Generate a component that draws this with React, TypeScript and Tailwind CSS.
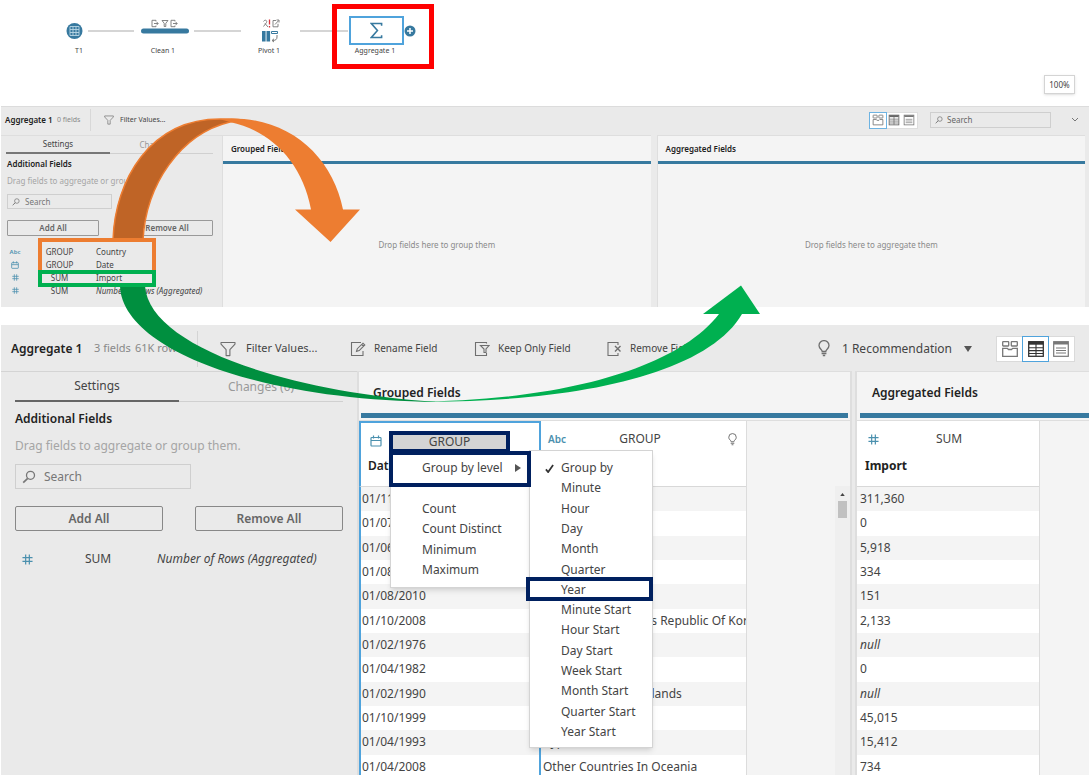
import React from "react";

type IconProps = { className?: string };

const Funnel = ({ className = "" }: IconProps) => (
  <svg viewBox="0 0 16 16" className={className} fill="none" stroke="#6f6f6f" strokeWidth="1.1" strokeLinejoin="round">
    <path d="M1 1.5h14v1.6L9.9 8.6v6H6.1v-6L1 3.100z" />
  </svg>
);

const Magnifier = ({ className = "" }: IconProps) => (
  <svg viewBox="0 0 14 14" className={className} fill="none" stroke="#777" strokeWidth="1.3">
    <circle cx="8.500" cy="5.300" r="4" />
    <path d="M5.700 8.300 1.200 12.600" strokeWidth="1.700" />
  </svg>
);

const Hash = ({ className = "" }: IconProps) => (
  <svg viewBox="0 0 12 12" className={className} fill="none" stroke="#4b90ae" strokeWidth="1.300">
    <path d="M4 0.500v11M8 0.500v11M0.500 4h11M0.500 8h11" />
  </svg>
);

const Calendar = ({ className = "" }: IconProps) => (
  <svg viewBox="0 0 12 12" className={className} fill="none" stroke="#4b90ae" strokeWidth="1.200">
    <rect x="1" y="2.500" width="10" height="8.500" rx="0.800" />
    <path d="M1 5.500h10M3.500 0.500v3M8.500 0.500v3" />
  </svg>
);

const Bulb = ({ className = "" }: IconProps) => (
  <svg viewBox="0 0 12 17" className={className} fill="none" stroke="#6f6f6f" strokeWidth="1.300">
    <path d="M4.200 11.500C4.200 9.500 1 8.800 1 5.600a5 5 0 0 1 10 0c0 3.200-3.200 3.900-3.200 5.900zM3.600 13.500h4.800M4.800 15.500h2.400" />
  </svg>
);

const RenameIcon = ({ className = "" }: IconProps) => (
  <svg viewBox="0 0 16 16" className={className} fill="none" stroke="#6f6f6f" strokeWidth="1.100">
    <path d="M11 1.500H1.500v13H13V10M6.500 10.500l.8-2.800 5.700-5.500 1.800 1.800-5.600 5.600zM11.700 3.500l1.800 1.800" />
  </svg>
);

const KeepIcon = ({ className = "" }: IconProps) => (
  <svg viewBox="0 0 16 16" className={className} fill="none" stroke="#6f6f6f" strokeWidth="1.100">
    <path d="M12.500 2.500v-1h-11v13h11V12" />
    <path d="M6.500 4.500h8.500l-3 3.500v3.500h-2V8z" />
  </svg>
);

const RemoveIcon = ({ className = "" }: IconProps) => (
  <svg viewBox="0 0 16 16" className={className} fill="none" stroke="#6f6f6f" strokeWidth="1.100">
    <path d="M12 4V1.500H2v13h10V12" />
    <path d="M9 5l5.500 5.500M14.500 5 9 10.500" strokeWidth="1.400" />
  </svg>
);

const ViewCards = ({ className = "" }: IconProps) => (
  <svg viewBox="0 0 18 18" className={className} fill="none" stroke="#777" strokeWidth="1.300">
    <rect x="1.700" y="1.700" width="6" height="4.300" rx="0.500" />
    <rect x="10.300" y="1.700" width="6" height="4.300" rx="0.500" />
    <path d="M1.700 8.300h4.600l1.200 1.200h3l1.200-1.200h4.600v8H1.700z" />
  </svg>
);

const ViewGrid = ({ className = "" }: IconProps) => (
  <svg viewBox="0 0 18 18" className={className} fill="none" stroke="currentColor" strokeWidth="1.300">
    <rect x="1.700" y="1.700" width="14.600" height="14.600" />
    <path d="M2 3.200h14" strokeWidth="3" />
    <path d="M9 4v12M2 7.700h14M2 10.600h14M2 13.500h14" strokeWidth="1.100" />
  </svg>
);

const ViewList = ({ className = "" }: IconProps) => (
  <svg viewBox="0 0 18 18" className={className} fill="none" stroke="#777" strokeWidth="1.200">
    <rect x="1.700" y="1.700" width="14.600" height="14.600" />
    <path d="M2 3.200h14" strokeWidth="2.600" />
    <path d="M4 8h10M4 10.500h10M4 13h10" strokeWidth="1" />
  </svg>
);

function FlowPane() {
  return (
    <section className="relative h-[106px] shrink-0 text-[7px] leading-[10px] text-[#444]">
      <svg className="absolute left-0 top-0 h-[60px] w-[440px]" viewBox="0 0 440 60" fill="none">
        <path d="M88 31h46M194 31h47M300 31h48" stroke="#c8c8c8" strokeWidth="1.500" />
        <circle cx="74.500" cy="31" r="8" fill="#37799f" />
        <path d="M70 26.500h9v9h-9zM73 26.500v9M76 26.500v9M70 29.500h9M70 32.500h9" stroke="#b9d6e4" strokeWidth="0.900" />
        <path d="M143.500 31h43" stroke="#37799f" strokeWidth="5" strokeLinecap="round" />
        <g stroke="#777" strokeWidth="0.900">
          <path d="M156 21.500v-1.200h-4v6.400h4v-1.200M154 23.500h4M156.700 22l1.500 1.500-1.500 1.500" />
          <path d="M162 20.500h6l-2.200 2.800v3.200h-1.600v-3.200z" />
          <path d="M175 21.500v-1.200h-4v6.400h4v-1.200M173 23.500h4M175.700 22l1.500 1.500-1.500 1.500" />
          <path d="M263.500 21.500c1.500-2.500 4-1 3 1l-3 4M265 23.500l3 3.500" />
          <path d="M276 20.500h-3v6.300h5v-3M275 24.500l3.500-3.800M276.500 20h2.500v2.500" />
        </g>
        <path d="M269.500 19.500v5M269.500 26v1.500" stroke="#d9343c" strokeWidth="1.300" />
        <path d="M262 31h3.600v10.500H262zM266.500 31h3.600v10.500h-3.600z" fill="#37799f" />
        <path d="M271.500 31.500h6v2h-6z" stroke="#37799f" />
        <path d="M277 35v2c0 2.500-1.500 3.500-4.500 3.500m1.500-1.700L272 40.500l2 1.500" stroke="#777" />
      </svg>
      <button aria-label="Aggregate step" className="absolute left-[349px] top-[16px] flex h-[29px] w-[55px] items-center justify-center border-2 border-[#4fa3dc] bg-white">
        <svg viewBox="0 0 14 18" className="h-[17px] w-[13px]" fill="none" stroke="#37799f" strokeWidth="1.700">
          <path d="M12.500 4V1.500h-11L8 9l-6.500 7.500h11V14" />
        </svg>
      </button>
      <svg className="absolute left-[404px] top-[25px] h-[12px] w-[12px]" viewBox="0 0 12 12">
        <circle cx="6" cy="6" r="5.500" fill="#37799f" />
        <path d="M6 3v6M3 6h6" stroke="#fff" strokeWidth="1.500" />
      </svg>
      <span className="absolute left-[79px] top-[46px] -translate-x-1/2">T1</span>
      <span className="absolute left-[163px] top-[46px] -translate-x-1/2 whitespace-nowrap">Clean 1</span>
      <span className="absolute left-[269px] top-[46px] -translate-x-1/2 whitespace-nowrap">Pivot 1</span>
      <span className="absolute left-[375px] top-[46px] -translate-x-1/2 whitespace-nowrap">Aggregate 1</span>
      <div className="absolute left-[332px] top-[4px] h-[65px] w-[102px] border-5 border-[#ff0000]" />
      <span className="absolute right-[15px] top-[75px] flex h-[19px] w-[31px] items-center justify-center border border-[#d4d4d4] bg-white text-[8px] shadow-sm">
        100%
      </span>
    </section>
  );
}

const smallFields = [
  { icon: "abc", agg: "GROUP", name: "Country" },
  { icon: "cal", agg: "GROUP", name: "Date" },
  { icon: "num", agg: "SUM", name: "Import" },
  { icon: "num", agg: "SUM", name: "Number of Rows (Aggregated)", italic: true },
];

function DropPane({ title, hint }: { title: string; hint: string }) {
  return (
    <div className="flex min-w-0 flex-1 flex-col border-l border-t border-[#dedede] bg-[#f4f4f4]">
      <h3 className="h-[25px] pl-2 text-[8px] font-semibold leading-[25px] text-[#222]">{title}</h3>
      <div className="h-[3px] bg-[#37799f]" />
      <p className="flex flex-1 items-center justify-center pt-[18px] text-[8px] text-[#8a8a8a]">{hint}</p>
    </div>
  );
}

function EmptyStep() {
  return (
    <section className="mx-px flex h-[201px] shrink-0 flex-col border-t border-[#dcdcdc] bg-[#eaeaea] text-[8px] text-[#444]">
      <header className="flex h-[28px] shrink-0 items-center pb-[2px]">
        <h2 className="w-[52px] whitespace-nowrap pl-1 font-semibold text-[#222]">Aggregate 1</h2>
        <span className="w-[37px] whitespace-nowrap pl-1 text-[7px] text-[#888]">0 fields</span>
        <span className="h-[22px] w-px bg-[#d8d8d8]" />
        <button className="ml-[13px] flex items-center gap-[6px] text-[7px]">
          <Funnel className="h-[10px] w-[10px]" />
          Filter Values...
        </button>
        <div className="ml-auto flex h-[17px] w-[49px] border border-[#dedede] bg-white">
          <button aria-label="Profile view" className="flex flex-1 items-center justify-center outline outline-[#6db3e2]"><ViewCards className="h-[12px] w-[12px]" /></button>
          <button aria-label="Grid view" className="flex flex-1 items-center justify-center text-[#666]"><ViewGrid className="h-[12px] w-[12px]" /></button>
          <button aria-label="List view" className="flex flex-1 items-center justify-center"><ViewList className="h-[12px] w-[12px]" /></button>
        </div>
        <label className="ml-3 flex h-[16px] w-[121px] items-center border border-[#cfcfcf] pl-1">
          <Magnifier className="h-[8px] w-[8px]" />
          <input aria-label="Search fields" placeholder="Search" className="ml-1 w-[90px] bg-transparent placeholder:text-[#666]" />
        </label>
        <button aria-label="Collapse" className="ml-5 mr-[10px]">
          <svg viewBox="0 0 8 6" className="h-[6px] w-[8px]" fill="none" stroke="#777"><path d="M1 1l3 3 3-3" /></svg>
        </button>
      </header>
      <div className="flex flex-1">
        <aside className="w-[221px] shrink-0 border-t border-[#dedede]">
          <div className="ml-[5px] mr-[9px] flex h-[18px]">
            <button className="w-[104px] border-b-2 border-[#777]">Settings</button>
            <button className="flex-1 border-b border-[#d0d0d0] text-[#999]">Changes (0)</button>
          </div>
          <div className="ml-[6px]">
            <h3 className="h-[20px] font-semibold leading-[20px] text-[#222]">Additional Fields</h3>
            <p className="h-[20px] leading-[14px] text-[#a5a5a5]">Drag fields to aggregate or group them.</p>
            <label className="flex h-[15px] w-[105px] items-center border border-[#cfcfcf] pl-1">
              <Magnifier className="h-[8px] w-[8px]" />
              <input aria-label="Search additional fields" placeholder="Search" className="ml-[5px] w-[80px] bg-transparent placeholder:text-[#777]" />
            </label>
            <div className="mr-[9px] mt-[11px] flex justify-between font-semibold text-[#666]">
              <button className="h-[16px] w-[92px] rounded-[1px] border border-[#999]">Add All</button>
              <button className="h-[16px] w-[92px] rounded-[1px] border border-[#999]">Remove All</button>
            </div>
            <ul className="mt-[10px] flex h-[51px] flex-col">
              {smallFields.map((f) => (
                <li key={f.name} className="flex flex-1 items-center">
                  <span className="flex w-[16px] justify-center text-[6px] font-semibold text-[#4b90ae]">
                    {f.icon === "abc" ? "Abc" : f.icon === "cal" ? <Calendar className="h-[8px] w-[8px]" /> : <Hash className="h-[7px] w-[7px]" />}
                  </span>
                  <span className="w-[73px] text-center">{f.agg}</span>
                  <span className={f.italic ? "whitespace-nowrap italic" : "whitespace-nowrap"}>{f.name}</span>
                </li>
              ))}
            </ul>
          </div>
        </aside>
        <div className="mr-[4px] flex flex-1 gap-[6px]">
          <DropPane title="Grouped Fields" hint="Drop fields here to group them" />
          <DropPane title="Aggregated Fields" hint="Drop fields here to aggregate them" />
        </div>
      </div>
    </section>
  );
}

const groupedRows = [
  ["01/11/1989", ""],
  ["01/07/2003", ""],
  ["01/06/1995", ""],
  ["01/08/1983", ""],
  ["01/08/2010", ""],
  ["01/10/2008", "Democratic People's Republic Of Korea"],
  ["01/02/1976", ""],
  ["01/04/1982", ""],
  ["01/02/1990", "Turks And Caicos Islands"],
  ["01/10/1999", ""],
  ["01/04/1993", "Cyprus"],
  ["01/04/2008", "Other Countries In Oceania"],
];

const importRows = ["311,360", "0", "5,918", "334", "151", "2,133", "null", "0", "null", "45,015", "15,412", "734"];

const levels = [
  "Group by", "Minute", "Hour", "Day", "Month", "Quarter", "Year",
  "Minute Start", "Hour Start", "Day Start", "Week Start", "Month Start", "Quarter Start", "Year Start",
];

function GroupMenus() {
  return (
    <>
      <div role="menu" className="absolute left-[31px] top-[30px] h-[137px] w-[140px] border border-[#d4d4d4] bg-white pt-[6px] shadow-md">
        <button role="menuitem" className="flex h-[20px] w-full items-center pl-[31px] text-left">
          Group by level
          <svg viewBox="0 0 6 8" className="ml-3 h-[8px] w-[6px]"><path d="M0 0l6 4-6 4z" fill="#555" /></svg>
        </button>
        <div className="mt-[21px] flex h-[81px] flex-col">
          {["Count", "Count Distinct", "Minimum", "Maximum"].map((m) => (
            <button role="menuitem" key={m} className="flex flex-1 items-center pl-[31px] text-left">{m}</button>
          ))}
        </div>
      </div>
      <div role="menu" className="absolute left-[170px] top-[29px] flex h-[298px] w-[124px] flex-col border border-[#d4d4d4] bg-white pb-[5px] pt-[7px] shadow-md">
        {levels.map((l, i) => (
          <button role="menuitem" key={l} className="flex flex-1 items-center text-left">
            <span className="flex w-[31px] justify-center">
              {i === 0 && (
                <svg viewBox="0 0 10 10" className="ml-[8px] h-[9px] w-[9px]" fill="none" stroke="#333" strokeWidth="1.900"><path d="M1 6l2.500 3L9 1" /></svg>
              )}
            </span>
            {l}
          </button>
        ))}
      </div>
      <div className="absolute left-[30px] top-[30px] h-[36px] w-[142px] border-4 border-[#00205f]" />
      <div className="absolute left-[167px] top-[156px] h-[24px] w-[127px] border-4 border-[#00205f]" />
    </>
  );
}

function GroupedTable() {
  return (
    <div className="relative w-[388px] shrink-0 border-r border-[#dcdcdc]">
      <table className="h-[358px] w-full table-fixed border-separate border-spacing-0 text-left">
        <thead>
          <tr className="h-[66px] bg-white align-top">
            <th className="w-[182px] border-x-2 border-b border-t-2 border-x-[#4fa3dc] border-b-[#d8d8d8] border-t-[#4fa3dc] p-0 font-semibold text-[#222]">
              <div className="flex items-start">
                <Calendar className="ml-[9px] mt-[12px] h-[12px] w-[12px]" />
                <button className="ml-[7px] mt-2 h-[22px] w-[121px] border-4 border-[#00205f] bg-[#d4d4d4] font-normal leading-[14px] text-[#444]">GROUP</button>
              </div>
              <div className="mt-1 pl-[7px] leading-[18px]">Date</div>
            </th>
            <th className="border-b border-[#d8d8d8] p-0 font-normal">
              <div className="flex h-[36px] items-center justify-between pl-[7px] pr-[9px]">
                <span className="text-[10px] font-semibold text-[#4b90ae]">Abc</span>
                <span className="pr-[14px]">GROUP</span>
                <Bulb className="h-[13px] w-[9px]" />
              </div>
            </th>
          </tr>
        </thead>
        <tbody>
          {groupedRows.map(([date, place]) => (
            <tr key={date} className="bg-white odd:bg-[#f4f4f4]">
              <td className="border-x-2 border-[#4fa3dc] p-0 pl-px">{date}</td>
              <td className="overflow-hidden whitespace-nowrap p-0 pl-[2px]">{place}</td>
            </tr>
          ))}
        </tbody>
      </table>
      <GroupMenus />
    </div>
  );
}

function ImportTable() {
  return (
    <table className="h-[358px] w-[183px] shrink-0 table-fixed border-separate border-spacing-0 border-r border-[#dcdcdc] text-left">
      <thead>
        <tr className="h-[66px] bg-white align-top">
          <th className="border-b border-[#d8d8d8] p-0">
            <div className="flex h-[36px] items-center pl-[11px] font-normal">
              <Hash className="h-[11px] w-[11px]" />
              <span className="w-[140px] text-center">SUM</span>
            </div>
            <div className="pl-2 leading-[18px] text-[#222]">Import</div>
          </th>
        </tr>
      </thead>
      <tbody>
        {importRows.map((v, i) => (
          <tr key={i} className="bg-white odd:bg-[#f4f4f4]">
            <td className={v === "null" ? "p-0 pl-[3px] italic" : "p-0 pl-[3px]"}>{v}</td>
          </tr>
        ))}
      </tbody>
    </table>
  );
}

function FilledStep() {
  return (
    <section className="mx-px mt-[18px] flex min-h-0 flex-1 flex-col bg-[#eaeaea] text-[12px] text-[#444]">
      <header className="flex h-[46px] shrink-0 items-center whitespace-nowrap pt-px text-[11px]">
        <h2 className="w-[93px] pl-[10px] text-[12px] font-semibold text-[#222]">Aggregate 1</h2>
        <span className="w-[41px] text-[#888]">3 fields</span>
        <span className="w-[62px] text-[#888]">61K rows</span>
        <span className="h-[36px] w-px bg-[#d4d4d4]" />
        <button className="ml-[22px] flex w-[130px] items-center gap-[10px]"><Funnel className="h-[16px] w-[16px]" />Filter Values...</button>
        <button className="flex w-[124px] items-center gap-2 text-[10px]"><RenameIcon className="h-[16px] w-[16px]" />Rename Field</button>
        <button className="flex w-[132px] items-center gap-2 text-[10px]"><KeepIcon className="h-[16px] w-[16px]" />Keep Only Field</button>
        <button className="flex items-center gap-2 text-[10px]"><RemoveIcon className="h-[16px] w-[16px]" />Remove Field</button>
        <button className="ml-auto flex items-center text-[12px]">
          <Bulb className="mr-3 h-[17px] w-[12px]" />
          1 Recommendation
          <svg viewBox="0 0 8 6" className="ml-3 h-[6px] w-[8px]"><path d="M0 0h8L4 6z" fill="#555" /></svg>
        </button>
        <div className="ml-6 mr-[14px] flex h-[26px] w-[79px] border border-[#dadada] bg-white">
          <button aria-label="Profile view" className="flex flex-1 items-center justify-center"><ViewCards className="h-[18px] w-[18px]" /></button>
          <button aria-label="Grid view" className="flex flex-1 items-center justify-center text-[#333] outline outline-[#4fa3dc]"><ViewGrid className="h-[18px] w-[18px]" /></button>
          <button aria-label="List view" className="flex flex-1 items-center justify-center"><ViewList className="h-[18px] w-[18px]" /></button>
        </div>
      </header>
      <div className="flex min-h-0 flex-1 overflow-hidden">
        <aside className="w-[356px] shrink-0 border-t border-[#d4d4d4] px-[14px]">
          <div className="flex h-[30px]">
            <button className="w-[164px] border-b-2 border-[#666]">Settings</button>
            <button className="flex-1 border-b border-[#d0d0d0] text-[#999]">Changes (0)</button>
          </div>
          <h3 className="mt-2 font-semibold leading-[18px] text-[#222]">Additional Fields</h3>
          <p className="mt-[9px] leading-[18px] text-[#a5a5a5]">Drag fields to aggregate or group them.</p>
          <label className="mt-[9px] flex h-[25px] w-[176px] items-center border border-[#cfcfcf] pl-[6px]">
            <Magnifier className="h-[14px] w-[14px]" />
            <input aria-label="Search fields to add" placeholder="Search" className="ml-2 w-[130px] bg-transparent placeholder:text-[#777]" />
          </label>
          <div className="mt-[17px] flex justify-between font-semibold text-[#666]">
            <button className="h-[25px] w-[148px] rounded-[2px] border border-[#888]">Add All</button>
            <button className="h-[25px] w-[148px] rounded-[2px] border border-[#888]">Remove All</button>
          </div>
          <div className="mt-[19px] flex h-[18px] items-center pl-[7px]">
            <Hash className="h-[11px] w-[11px]" />
            <span className="w-[124px] pl-[6px] text-center">SUM</span>
            <span className="whitespace-nowrap italic">Number of Rows (Aggregated)</span>
          </div>
        </aside>
        <div className="flex min-w-0 flex-1 flex-col border-x-2 border-t border-[#dedede] bg-[#f4f4f4]">
          <h3 className="h-[41px] shrink-0 pl-[14px] font-semibold leading-[42px] text-[#222]">Grouped Fields</h3>
          <div className="mx-[2px] h-[5px] shrink-0 bg-[#37799f]" />
          <div className="mt-[2px] flex border-t border-[#dedede]">
            <GroupedTable />
            <div className="ml-auto mt-[65px] w-[15px] bg-[#efefef] px-[3px] pt-[7px]">
              <svg viewBox="0 0 6 4" className="mx-auto h-[3px] w-[5px]"><path d="M0 4h6L3 0z" fill="#444" /></svg>
              <div className="mt-[5px] h-[17px] bg-[#c1c1c1]" />
            </div>
          </div>
        </div>
        <div className="ml-[3px] flex w-[234px] shrink-0 flex-col border-l-2 border-t border-[#dedede] bg-[#f4f4f4]">
          <h3 className="h-[41px] shrink-0 pl-[15px] font-semibold leading-[42px] text-[#222]">Aggregated Fields</h3>
          <div className="ml-[3px] h-[5px] shrink-0 bg-[#37799f]" />
          <div className="mt-[2px] border-t border-[#dedede]">
            <ImportTable />
          </div>
        </div>
      </div>
    </section>
  );
}

function Annotations() {
  return (
    <svg className="pointer-events-none absolute left-0 top-0 h-[775px] w-[1090px]" viewBox="0 0 1090 775" fill="none">
      <path d="M113 240C115 180 150 119 220 119C226 119 235 119 242 120L230 122C180 134 146 185 143 240z" fill="#bf6426" stroke="#ed7d31" strokeWidth="1.500" />
      <path d="M219 119C285 113 332 154 343 209.500H360L330.500 242L295 209.500H311C302 160 268 130 230 122z" fill="#ed7d31" />
      <path d="M40 272V240h114v32" stroke="#ed7d31" strokeWidth="4" />
      <path d="M120 286C122 348 254 400 437 402C282 391 149 345 145 286z" fill="#008f3f" />
      <path d="M410 401.500C540 402 672 375 719 314H703L741 285.500L760 314H742C705 378 560 404 410 401.500z" fill="#00b050" />
      <rect x="40" y="272" width="114" height="13" stroke="#00b050" strokeWidth="4" />
    </svg>
  );
}

export default function App() {
  return (
    <main className="relative flex h-screen flex-col overflow-hidden bg-white font-['Noto_Sans',sans-serif]">
      <FlowPane />
      <EmptyStep />
      <FilledStep />
      <Annotations />
    </main>
  );
}
